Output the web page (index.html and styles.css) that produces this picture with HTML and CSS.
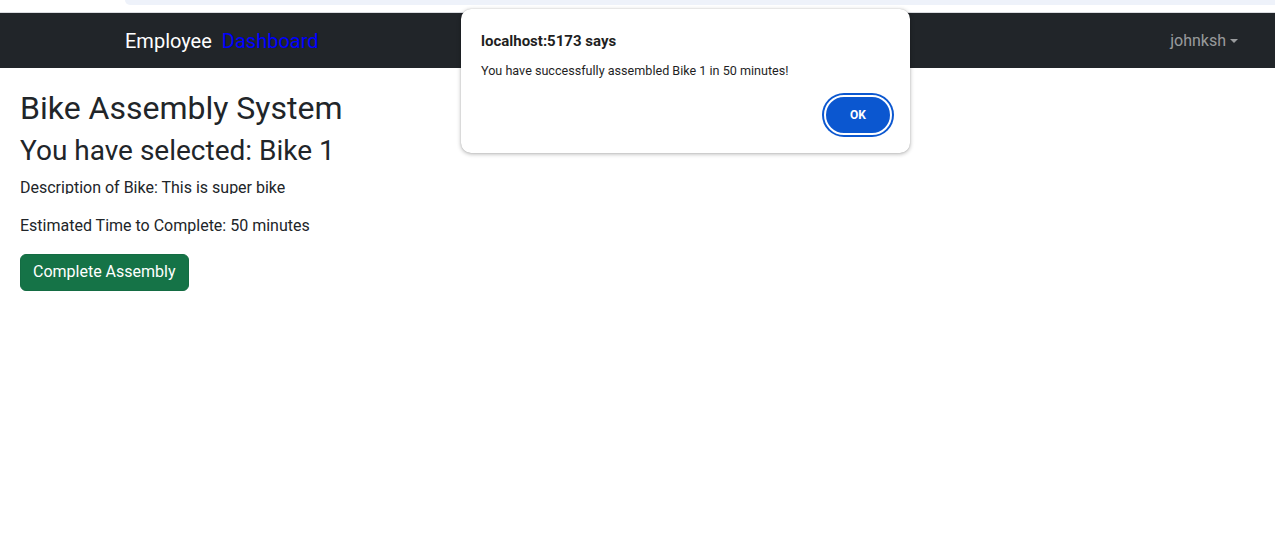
FILE: index.html
```html
<!DOCTYPE html>
<html lang="en">
<head>
<meta charset="utf-8">
<title>Bike Assembly System</title>
<link rel="stylesheet" href="styles.css">
</head>
<body>
<div class="chrome">
  <div class="chrome-bar"></div>
</div>
<nav class="navbar">
  <div class="brand">
    <span class="brand-main">Employee</span>
    <a class="brand-link" href="#">Dashboard</a>
  </div>
  <div class="user">johnksh<span class="caret"></span></div>
</nav>
<main class="content">
  <h2 class="title">Bike Assembly System</h2>
  <h3 class="subtitle">You have selected: Bike 1</h3>
  <div class="desc"><p>Description of Bike: This is super bike</p></div>
  <p class="time">Estimated Time to Complete: 50 minutes</p>
  <button class="btn-success" type="button">Complete Assembly</button>
</main>
<div class="dialog">
  <div class="dialog-title">localhost:5173 says</div>
  <div class="dialog-msg">You have successfully assembled Bike 1 in 50 minutes!</div>
  <div class="dialog-actions">
    <button class="ok" type="button">OK</button>
  </div>
</div>
</body>
</html>
```
FILE: styles.css
```css
* { box-sizing: border-box; }
html, body { margin: 0; padding: 0; background: #fff; }
body {
  font-family: Roboto, "Open Sans", sans-serif;
  color: #212529;
  font-size: 16px;
  line-height: 1.5;
}
.chrome {
  height: 13px;
  background: #fff;
  border-bottom: 1px solid #dadce0;
}
.chrome-bar {
  margin-left: 125px;
  height: 5px;
  background: #eef2fa;
  border-bottom-left-radius: 6px;
}
.navbar {
  height: 55px;
  background: #212529;
  display: flex;
  align-items: center;
  justify-content: space-between;
  padding: 0 37px 0 125px;
}
.brand { display: flex; align-items: baseline; gap: 10px; font-size: 20px; }
.brand-main { color: #fff; }
.brand-link { color: #0000ff; text-decoration: none; }
.user { color: rgba(255,255,255,0.55); display: flex; align-items: center; }
.caret {
  display: inline-block;
  margin-left: 4px;
  border-top: 4px solid rgba(255,255,255,0.55);
  border-left: 4px solid transparent;
  border-right: 4px solid transparent;
}
.content { padding: 21px 20px 0; }
.title { margin: 0 0 7px; font-size: 32px; font-weight: 400; line-height: 1.2; }
.subtitle { margin: 0 0 8px; font-size: 28px; font-weight: 400; line-height: 1.2; }
.desc { height: 18px; overflow: hidden; margin-bottom: 20px; }
.desc p { margin: 0; }
.time { margin: 0 0 16px; }
.btn-success {
  font: inherit;
  background: #157347;
  color: #fff;
  border: 1px solid #146c43;
  border-radius: 6px;
  padding: 5px 12px 6px;
  line-height: 1.5;
}
.dialog {
  position: absolute;
  left: 461px;
  top: 9px;
  width: 449px;
  height: 144px;
  background: #fff;
  border-radius: 10px;
  box-shadow: 0 1px 4px rgba(0,0,0,0.3), 0 0 1px rgba(0,0,0,0.25);
  padding: 22px 18px 18px 20px;
  color: #1f1f1f;
}
.dialog-title { font-size: 15px; font-weight: 700; line-height: 20px; }
.dialog-msg { font-size: 12.6px; margin-top: 11px; line-height: 18px; }
.dialog-actions { display: flex; justify-content: flex-end; margin-top: 15px; }
.ok {
  width: 68px;
  height: 40px;
  border-radius: 20px;
  background: #0b57d0;
  color: #fff;
  font: 700 12px Roboto, sans-serif;
  border: 2px solid #fff;
  box-shadow: 0 0 0 2px #0b57d0;
  padding: 0;
}
```
